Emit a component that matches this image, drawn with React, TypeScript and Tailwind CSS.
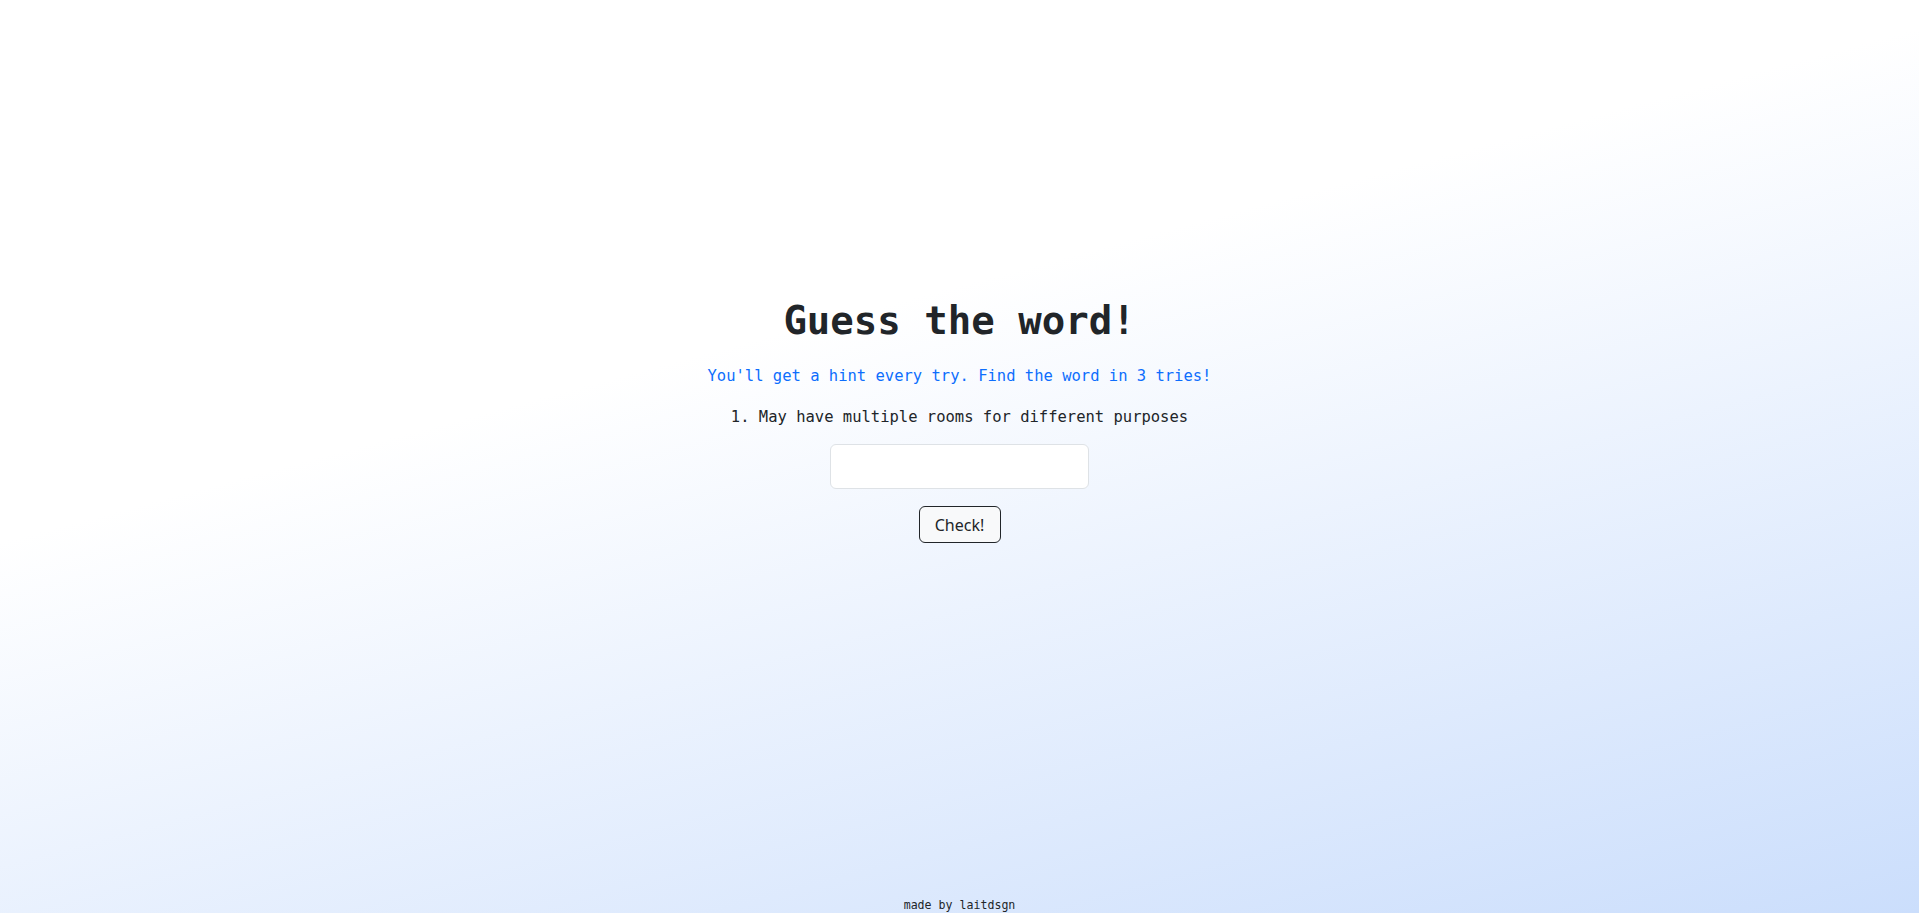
import React from 'react';

const mono = "font-['DejaVu_Sans_Mono',monospace]";

const App = () => {
  return (
    <div className="min-h-screen flex flex-col bg-[linear-gradient(165deg,#ffffff_38%,#cbdefc_100%)]">
      {/* Jeu */}
      <main className="flex-1 flex flex-col items-center pt-[297px]">
        <h1 className={`${mono} text-[39px] leading-[47px] font-bold text-[#212529]`}>Guess the word!</h1>
        <p className={`${mono} mt-[21px] text-[15.5px] leading-[22px] text-[#0d6efd]`}>
          You'll get a hint every try. Find the word in 3 tries!
        </p>
        <ol className={`${mono} mt-[19px] text-[15.5px] leading-[22px] text-[#212529]`}>
          <li>1. May have multiple rooms for different purposes</li>
        </ol>
        <input
          type="text"
          className="mt-[16px] w-[259px] h-[45px] bg-white border border-[#dee2e6] rounded-[6px] px-3 outline-none"
        />
        <button className="mt-[17px] w-[82px] h-[37px] bg-[#f8f9fa] border border-[#212529] rounded-[6px] text-[16px] font-['Noto_Sans',sans-serif] text-[#212529]">
          Check!
        </button>
      </main>
      {/* Pied de page */}
      <footer className={`${mono} text-center text-[11.6px] leading-[14px] text-[#212529] pb-[1px]`}>made by laitdsgn</footer>
    </div>
  );
};

export default App;
